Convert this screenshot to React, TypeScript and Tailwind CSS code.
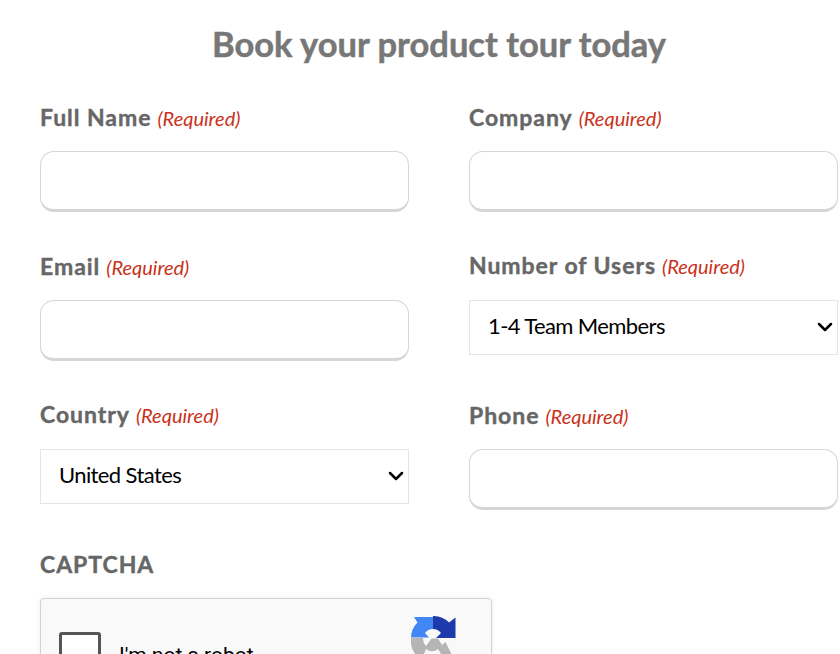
import { ChevronDown } from "lucide-react";

const required = <span className="ml-1.5 text-[20px] font-normal italic tracking-normal text-[#c9321b] [-webkit-text-stroke:0]">(Required)</span>;

function Label({ text, req = true }: { text: string; req?: boolean }) {
  return (
    <label className="block h-[33px] text-[23px] font-bold leading-[33px] tracking-[0.95px] text-[#666] [-webkit-text-stroke:0.4px_#666]">
      {text}
      {req && required}
    </label>
  );
}

function TextField({ label }: { label: string }) {
  return (
    <div className="h-[149px]">
      <Label text={label} />
      <input
        type="text"
        className="mt-[17px] block h-[61px] w-full rounded-[14px] border border-b-[3px] border-[#d6d6d6] bg-white px-4 outline-none"
      />
    </div>
  );
}

function SelectField({ label, value }: { label: string; value: string }) {
  return (
    <div className="-mt-[1px] h-[150px]">
      <Label text={label} />
      <div className="relative mt-[18px]">
        <select
          defaultValue={value}
          className="block h-[55px] w-full appearance-none rounded-none border border-[#e5e5e5] bg-white pl-[18px] pr-8 pb-1 text-[22px] tracking-[-0.6px] text-black outline-none"
        >
          <option>{value}</option>
        </select>
        <ChevronDown size={24} strokeWidth={2.5} className="pointer-events-none absolute right-[1px] top-[15px] text-black" />
      </div>
    </div>
  );
}

function RecaptchaLogo() {
  return (
    <svg viewBox="0 0 46 46" className="h-[46px] w-[46px]">
      <path d="M22 0 A22 22 0 0 1 38 6.5 L44.5 1.5 V22 H25 L30 17 A11 11 0 0 0 22 13 Z" fill="#1c3aa9" />
      <path d="M0 22 A22 22 0 0 1 6.5 6.5 L3 1 H22 V13 A11 11 0 0 0 14 17 L18 21.5 H0 Z" fill="#4285f4" />
      <path d="M0 22 H12 A11 11 0 0 0 15 30 L20.5 22.5 H27 L31 29 L34.5 26 L40 37 V38 H30 L27 33 A9 9 0 0 1 15 33 L13 38 H4 A22 22 0 0 1 0 22 Z" fill="#b5b5b5" />
    </svg>
  );
}

export default function App() {
  return (
    <div className="h-[654px] overflow-hidden bg-white pl-10 pr-[2px] font-['Lato',sans-serif]">
      <h2 className="pt-[20px] text-center text-[34.5px] font-bold leading-[48px] text-[#777] [-webkit-text-stroke:0.5px_#777]">
        Book your product tour today
      </h2>
      <div className="mt-[33px] grid grid-cols-2 gap-x-[60px]">
        <TextField label="Full Name" />
        <TextField label="Company" />
        <TextField label="Email" />
        <SelectField label="Number of Users" value="1-4 Team Members" />
        <SelectField label="Country" value="United States" />
        <TextField label="Phone" />
      </div>
      <div>
        <Label text="CAPTCHA" req={false} />
        <div className="mt-[17px] flex h-[117px] w-[452px] items-start rounded-[4px] border border-[#d3d3d3] bg-[#f9f9f9] pl-[18px] pr-[34px] pt-[17px] shadow-[0_0_4px_rgba(0,0,0,0.08)]">
          <div className="mt-[16px] h-[42px] w-[42px] shrink-0 rounded-[3px] border-[3px] border-[#555] bg-white" />
          <span className="ml-[18px] mt-[24px] font-['Roboto',sans-serif] text-[21px] leading-[30px] text-black">I'm not a robot</span>
          <div className="ml-auto">
            <RecaptchaLogo />
          </div>
        </div>
      </div>
    </div>
  );
}
